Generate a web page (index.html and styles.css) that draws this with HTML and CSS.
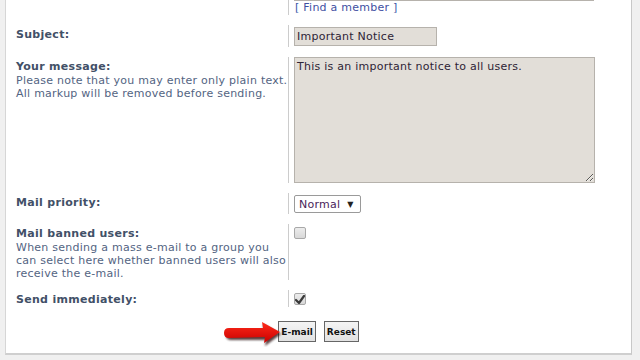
FILE: index.html
```html
<!DOCTYPE html>
<html>
<head>
<meta charset="utf-8">
<link rel="stylesheet" href="styles.css">
</head>
<body>
<div class="panel">
  <dl class="row row-first">
    <dt></dt>
    <dd><input class="field field-wide" type="text" value=""><div class="findlink">[ <a href="#">Find a member</a> ]</div></dd>
  </dl>
  <dl class="row">
    <dt><label>Subject:</label></dt>
    <dd class="pad2"><input class="field field-subject" type="text" value="Important Notice"></dd>
  </dl>
  <dl class="row">
    <dt><label>Your message:</label><span class="explain">Please note that you may enter only plain text.<br>All markup will be removed before sending.</span></dt>
    <dd><textarea class="field message">This is an important notice to all users.</textarea></dd>
  </dl>
  <dl class="row">
    <dt><label>Mail priority:</label></dt>
    <dd class="pad2"><span class="select"><span class="select-text">Normal</span><span class="select-arrow">▼</span></span></dd>
  </dl>
  <dl class="row">
    <dt><label>Mail banned users:</label><span class="explain">When sending a mass e-mail to a group you<br>can select here whether banned users will also<br>receive the e-mail.</span></dt>
    <dd class="pad3"><span class="check"></span></dd>
  </dl>
  <dl class="row">
    <dt><label>Send immediately:</label></dt>
    <dd class="pad3"><span class="check checked"><svg width="10" height="9" viewBox="0 0 10 9"><path d="M1 5 L4 8 L9 1" fill="none" stroke="#3a3a3a" stroke-width="2.2" stroke-linejoin="round" stroke-linecap="round"/></svg></span></dd>
  </dl>
  <div class="buttons">
    <span class="arrow-wrap">
      <svg class="arrow" width="60" height="26" viewBox="0 0 60 26">
        <defs>
          <filter id="blur" x="-10%" y="-30%" width="130%" height="160%"><feGaussianBlur stdDeviation="1"/></filter>
          <linearGradient id="red" x1="0" y1="0" x2="0" y2="1">
            <stop offset="0" stop-color="#ff2a1a"/>
            <stop offset="1" stop-color="#c80000"/>
          </linearGradient>
        </defs>
        <path d="M4,14 Q4,9 9,9 L42,9 L41,3 L59,13 L43,25 L44,19 L9,19 Q4,19 4,14 Z" fill="#200" opacity="0.75" filter="url(#blur)"/>
        <path d="M2,12 Q2,7 7,7 L41,7 L40,1 L58,11 L42,22 L43,16 L7,17 Q2,17 2,12 Z" fill="url(#red)"/>
      </svg>
      <button class="btn">E-mail</button>
    </span>
    <button class="btn">Reset</button>
  </div>
</div>
</body>
</html>
```
FILE: styles.css
```css
html, body {
  margin: 0;
  padding: 0;
}
body {
  background: #f0f0f0;
  font-family: "DejaVu Sans", Verdana, sans-serif;
  font-size: 11px;
  letter-spacing: 0.25px;
  width: 640px;
  height: 360px;
  overflow: hidden;
}
.panel {
  box-sizing: border-box;
  margin-left: 5px;
  width: 627px;
  background: #fff;
  border-left: 1px solid #d6d6d6;
  border-right: 1px solid #c8c8c8;
  border-bottom: 2px solid #cfcfcf;
  padding-bottom: 11px;
}
.row {
  display: flex;
  margin: 0 0 10px 0;
}
.row-first {
  margin-top: -19px;
}
.row dt {
  box-sizing: border-box;
  width: 282px;
  padding: 3px 0 0 10px;
  margin: 0;
}
.row dt label {
  display: block;
  font-weight: bold;
  color: #425067;
  line-height: 14px;
  letter-spacing: 0.3px;
}
.explain {
  display: block;
  color: #536482;
  line-height: 13px;
}
.row dd {
  margin: 0;
  border-left: 1px solid #cccccc;
  padding-left: 5px;
}
.pad2 { padding-top: 2px; padding-bottom: 1px; }
.pad3 { padding-top: 3px; }
.field {
  box-sizing: border-box;
  display: block;
  margin: 0;
  background: #e2ded8;
  border: 1px solid #b6b2ac;
  font-family: "DejaVu Sans", Verdana, sans-serif;
  font-size: 11px;
  letter-spacing: 0.25px;
  color: #2e2436;
  outline: none;
}
.field-wide {
  width: 300px;
  height: 20px;
}
.findlink {
  line-height: 14px;
  color: #3a58a8;
  padding-left: 1px;
}
.findlink a {
  color: #3f4fa2;
  text-decoration: none;
}
.field-subject {
  width: 143px;
  height: 19px;
  padding: 0 2px;
}
.message {
  width: 301px;
  height: 126px;
  padding: 2px 2px;
  resize: both;
  line-height: 13px;
}
.select {
  box-sizing: border-box;
  display: flex;
  align-items: center;
  width: 67px;
  height: 18px;
  border: 1px solid #9a9a9a;
  border-radius: 2px;
  background: #fff;
  padding-left: 4px;
  font-size: 11px;
}
.select-text {
  color: #4a1e5a;
}
.select-arrow {
  margin-left: 7px;
  font-size: 8px;
  color: #222;
}
.check {
  box-sizing: border-box;
  display: flex;
  align-items: center;
  justify-content: center;
  width: 12px;
  height: 12px;
  border: 1px solid #a8a8a8;
  border-radius: 2px;
  background: linear-gradient(#ececec, #d8d8d8);
}
.buttons {
  display: flex;
  justify-content: center;
  gap: 8px;
  padding-top: 4px;
}
.arrow-wrap {
  position: relative;
  display: block;
}
.arrow {
  position: absolute;
  right: calc(100% - 4px);
  top: 0;
  z-index: 2;
}
.btn {
  box-sizing: border-box;
  height: 21px;
  margin: 0;
  padding: 0 2px;
  border: 1px solid #666;
  background: linear-gradient(#f4f4f4, #e2e2e2);
  font-family: "DejaVu Sans", Verdana, sans-serif;
  font-size: 9px;
  letter-spacing: 0;
  font-weight: bold;
  color: #111;
  border-radius: 0;
}
```
